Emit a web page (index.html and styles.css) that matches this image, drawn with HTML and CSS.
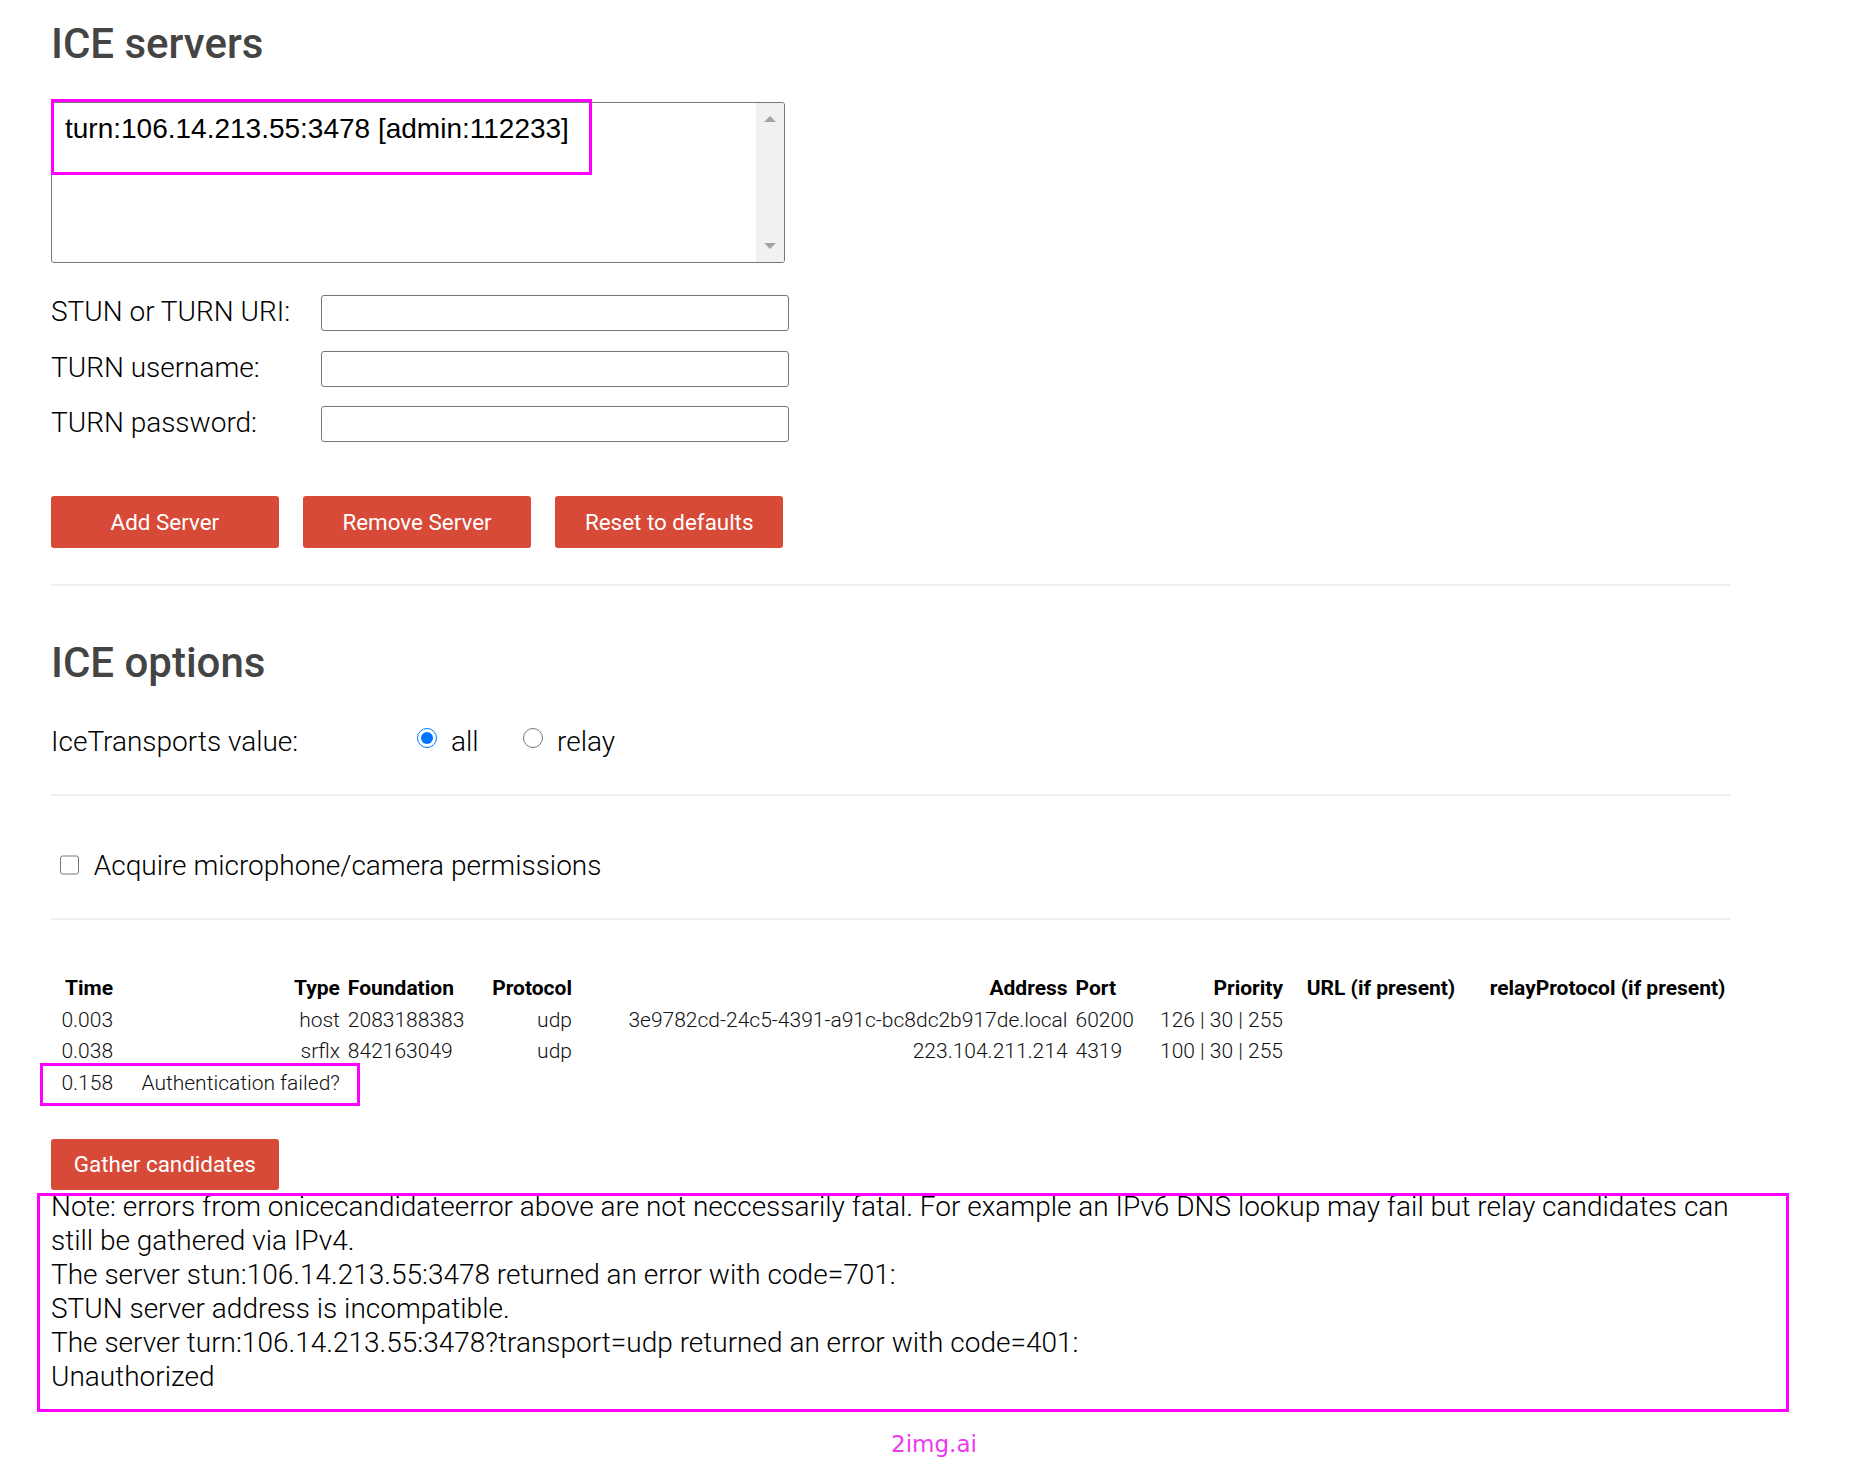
FILE: index.html
```html
<!DOCTYPE html>
<html lang="en">
<head>
<meta charset="utf-8">
<title>Trickle ICE</title>
<link rel="stylesheet" href="styles.css">
</head>
<body>
<div class="page">
  <div class="container">
    <section class="servers">
      <h2 class="title">ICE servers</h2>
      <div class="listbox">
        <div class="listbox-items">
          <div class="listbox-item">turn:106.14.213.55:3478 [admin:112233]</div>
        </div>
        <div class="scrollbar">
          <span class="arrow arrow-up"></span>
          <span class="arrow arrow-down"></span>
        </div>
      </div>
      <div class="fields">
        <div class="field">
          <label class="field-label" for="url">STUN or TURN URI:</label>
          <input class="text-input" id="url" type="text">
        </div>
        <div class="field">
          <label class="field-label" for="username">TURN username:</label>
          <input class="text-input" id="username" type="text">
        </div>
        <div class="field">
          <label class="field-label" for="password">TURN password:</label>
          <input class="text-input" id="password" type="text">
        </div>
      </div>
      <div class="actions">
        <button class="btn" type="button">Add Server</button>
        <button class="btn" type="button">Remove Server</button>
        <button class="btn" type="button">Reset to defaults</button>
      </div>
    </section>

    <hr class="rule rule-1">

    <section class="options">
      <h2 class="title title-options">ICE options</h2>
      <div class="transports">
        <span class="transports-label">IceTransports value:</span>
        <label class="radio radio-all"><input class="radio-input" type="radio" name="transports" checked><span>all</span></label>
        <label class="radio"><input class="radio-input" type="radio" name="transports"><span>relay</span></label>
      </div>
    </section>

    <hr class="rule rule-2">

    <label class="permissions"><input class="checkbox" type="checkbox"><span>Acquire microphone/camera permissions</span></label>

    <hr class="rule rule-3">

    <table class="candidates">
      <colgroup>
        <col class="col-time">
        <col class="col-type">
        <col class="col-foundation">
        <col class="col-protocol">
        <col class="col-address">
        <col class="col-port">
        <col class="col-priority">
        <col class="col-url">
        <col class="col-relay">
      </colgroup>
      <thead>
        <tr>
          <th>Time</th>
          <th>Type</th>
          <th class="cell-left">Foundation</th>
          <th>Protocol</th>
          <th>Address</th>
          <th class="cell-left">Port</th>
          <th>Priority</th>
          <th>URL (if present)</th>
          <th>relayProtocol (if present)</th>
        </tr>
      </thead>
      <tbody>
        <tr>
          <td>0.003</td>
          <td>host</td>
          <td class="cell-left">2083188383</td>
          <td>udp</td>
          <td>3e9782cd-24c5-4391-a91c-bc8dc2b917de.local</td>
          <td class="cell-left">60200</td>
          <td>126 | 30 | 255</td>
          <td></td>
          <td></td>
        </tr>
        <tr>
          <td>0.038</td>
          <td>srflx</td>
          <td class="cell-left">842163049</td>
          <td>udp</td>
          <td>223.104.211.214</td>
          <td class="cell-left">4319</td>
          <td>100 | 30 | 255</td>
          <td></td>
          <td></td>
        </tr>
        <tr>
          <td>0.158</td>
          <td>Authentication failed?</td>
          <td colspan="7"></td>
        </tr>
      </tbody>
    </table>

    <button class="btn btn-gather" type="button">Gather candidates</button>

    <div class="note">Note: errors from onicecandidateerror above are not neccessarily fatal. For example an IPv6 DNS lookup may fail but relay candidates can<br>still be gathered via IPv4.<br>The server stun:106.14.213.55:3478 returned an error with code=701:<br>STUN server address is incompatible.<br>The server turn:106.14.213.55:3478?transport=udp returned an error with code=401:<br>Unauthorized</div>
  </div>

  <div class="watermark">2img.ai</div>

  <div class="mark mark-server"></div>
  <div class="mark mark-error"></div>
  <div class="mark mark-note"></div>
</div>
</body>
</html>
```

FILE: styles.css
```css
* {
  box-sizing: border-box;
}

html,
body {
  margin: 0;
  padding: 0;
  background: #ffffff;
}

body {
  font-family: Roboto, "Liberation Sans", sans-serif;
  font-weight: 300;
  font-size: 28px;
  color: #000000;
}

.page {
  position: relative;
  width: 1868px;
  min-height: 1458px;
  overflow: hidden;
}

.container {
  width: 1729.5px;
  padding: 20px 0 0 51px;
}

/* Headings */
.title {
  margin: 0;
  font-size: 42px;
  line-height: 48px;
  font-weight: 500;
  color: #444444;
}

.title-options {
  margin-top: 52.5px;
}

/* Server list box */
.listbox {
  display: flex;
  margin-top: 34px;
  width: 734.3px;
  height: 161px;
  border: 1px solid #767676;
  border-radius: 3px;
  overflow: hidden;
  background: #ffffff;
}

.listbox-items {
  flex: 1;
  padding: 9.5px 13px;
  font-family: "Liberation Sans", Arial, sans-serif;
  font-weight: 400;
  font-size: 28px;
  line-height: 31px;
  color: #000000;
}

.scrollbar {
  width: 28.3px;
  background: #f1f1f1;
  display: flex;
  flex-direction: column;
  align-items: center;
  justify-content: space-between;
  padding: 13px 0 12.7px;
}

.arrow {
  width: 0;
  height: 0;
  border-left: 6.5px solid transparent;
  border-right: 6.5px solid transparent;
}

.arrow-up {
  border-bottom: 6px solid #a3a3a3;
}

.arrow-down {
  border-top: 6px solid #a3a3a3;
}

/* Form fields */
.fields {
  margin-top: 32px;
  display: grid;
  row-gap: 19.5px;
}

.field {
  display: flex;
  align-items: flex-start;
  height: 36px;
}

.field-label {
  width: 269.7px;
  line-height: 33px;
}

.text-input {
  width: 468px;
  height: 36px;
  margin: 0;
  padding: 0 6px;
  border: 1px solid #767676;
  border-radius: 3px;
  background: #ffffff;
  font: inherit;
}

/* Buttons */
.actions {
  display: flex;
  gap: 24.5px;
  margin-top: 54px;
}

.btn {
  display: flex;
  align-items: center;
  justify-content: center;
  width: 227.7px;
  height: 51.7px;
  margin: 0;
  padding: 0;
  border: none;
  border-radius: 3px;
  background: #d84a38;
  color: #ffffff;
  font-family: Roboto, "Liberation Sans", sans-serif;
  font-weight: 400;
  font-size: 22.4px;
}

.btn-gather {
  margin-top: 39.2px;
  height: 51px;
}

/* Rules */
.rule {
  margin: 36.8px 0 0;
  height: 0;
  border: 0;
  border-top: 2px solid #eeeeee;
}

.rule-2 {
  margin-top: 35px;
}

.rule-3 {
  margin-top: 34.6px;
}

/* ICE transport options */
.transports {
  display: flex;
  align-items: flex-start;
  margin-top: 38px;
  line-height: 34px;
}

.transports-label {
  width: 366px;
}

.radio {
  display: flex;
  align-items: flex-start;
}

.radio-all {
  width: 106px;
}

.radio-input {
  width: 20px;
  height: 20px;
  margin: 3px 14px 0 0;
}

/* Permissions checkbox */
.permissions {
  display: flex;
  align-items: flex-start;
  margin-top: 53.4px;
  line-height: 34px;
}

.checkbox {
  width: 19.6px;
  height: 19.6px;
  margin: 5.6px 14.3px 0 8.8px;
}

/* Candidate table */
.candidates {
  margin-top: 53px;
  width: 1678.4px;
  table-layout: fixed;
  border-collapse: collapse;
  font-size: 21px;
  line-height: 31.7px;
}

.candidates th,
.candidates td {
  padding: 0 4px;
  height: 31.7px;
  text-align: right;
  white-space: nowrap;
  vertical-align: top;
}

.candidates th {
  font-weight: 700;
  color: #000000;
}

.candidates td {
  font-weight: 300;
  color: #111111;
}

.candidates .cell-left {
  text-align: left;
}

.col-time { width: 66px; }
.col-type { width: 226.7px; }
.col-foundation { width: 141.3px; }
.col-protocol { width: 90.7px; }
.col-address { width: 495.3px; }
.col-port { width: 73px; }
.col-priority { width: 142.3px; }
.col-url { width: 172.2px; }
.col-relay { width: 269.9px; }

/* Note */
.note {
  font-size: 28px;
  line-height: 34px;
  color: #000000;
}

/* Watermark */
.watermark {
  margin-top: 37.3px;
  text-align: center;
  font-family: "DejaVu Sans", sans-serif;
  font-weight: 400;
  font-size: 23px;
  line-height: 27px;
  color: #ee3aee;
}

/* Annotation overlays */
.mark {
  position: absolute;
  border: 3px solid #ff00ff;
  pointer-events: none;
}

.mark-server {
  left: 50.5px;
  top: 98.5px;
  width: 541.5px;
  height: 76px;
}

.mark-error {
  left: 39.6px;
  top: 1063px;
  width: 320.4px;
  height: 43px;
}

.mark-note {
  left: 36.5px;
  top: 1193px;
  width: 1752px;
  height: 219px;
}
```
